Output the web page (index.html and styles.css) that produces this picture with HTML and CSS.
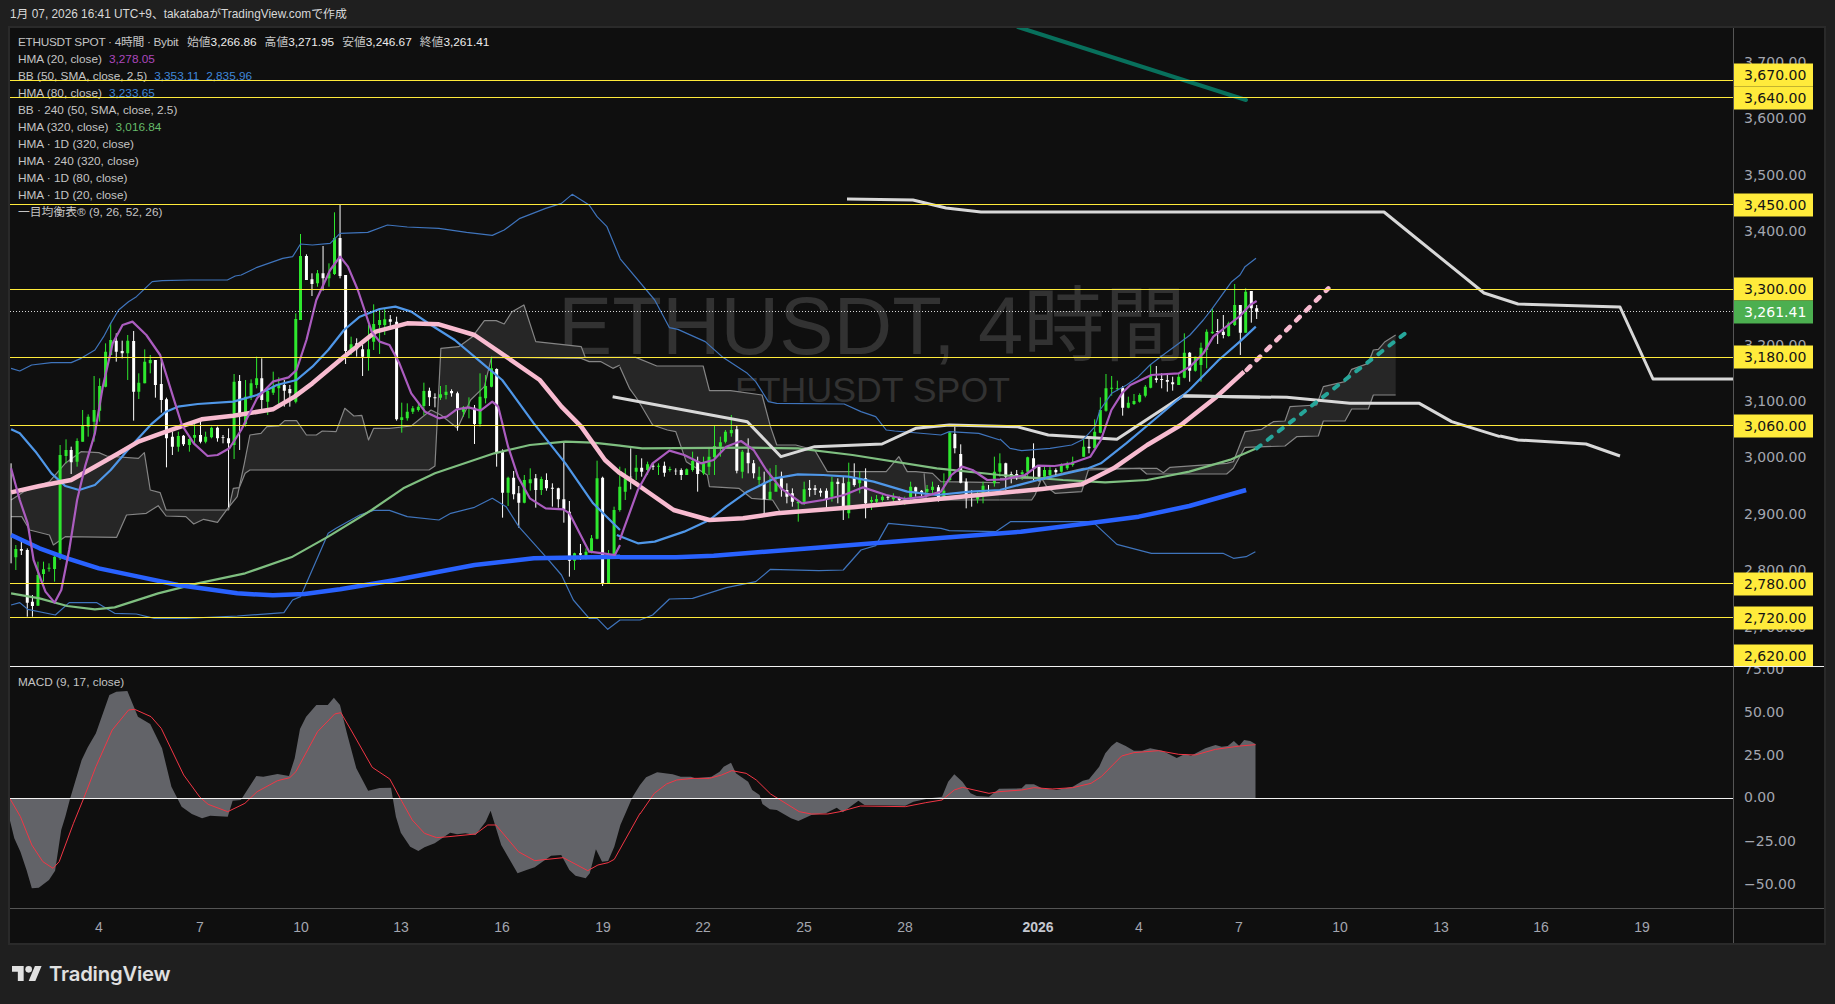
FILE: index.html
```html
<!DOCTYPE html>
<html lang="ja">
<head>
<meta charset="utf-8">
<title>ETHUSDT SPOT 4時間</title>
<link rel="stylesheet" href="styles.css">
</head>
<body>
<header class="title">1月 07, 2026 16:41 UTC+9、takatabaがTradingView.comで作成</header>
<main class="frame">
  <section class="pane pane-main">
    <div class="wm wm-big">ETHUSDT, 4時間</div>
    <div class="wm wm-small">ETHUSDT SPOT</div>
    <div class="legend">
      <div class="row"><span class="sym">ETHUSDT SPOT · 4時間 · Bybit</span><span class="ohlc">始値<b>3,266.86</b></span><span class="ohlc">高値<b>3,271.95</b></span><span class="ohlc">安値<b>3,246.67</b></span><span class="ohlc">終値<b>3,261.41</b></span></div>
      <div class="row">HMA (20, close)<span class="val purple">3,278.05</span></div>
      <div class="row">BB (50, SMA, close, 2.5)<span class="val blue">3,353.11</span><span class="val blue">2,835.96</span></div>
      <div class="row">HMA (80, close)<span class="val blue">3,233.65</span></div>
      <div class="row">BB · 240 (50, SMA, close, 2.5)</div>
      <div class="row">HMA (320, close)<span class="val green">3,016.84</span></div>
      <div class="row">HMA · 1D (320, close)</div>
      <div class="row">HMA · 240 (320, close)</div>
      <div class="row">HMA · 1D (80, close)</div>
      <div class="row">HMA · 1D (20, close)</div>
      <div class="row">一目均衡表® (9, 26, 52, 26)</div>
    </div>
    <svg class="plot" viewBox="10 28 1723 638" aria-hidden="true">
      <!-- clouds -->
      <g transform="translate(0 300) scale(.39541 .33333)">
        <polygon class="cloud" points="28,600 60,575 125,545 165,490 205,455 250,458 270,468 350,475 365,458 380,570 405,578 420,630 578,630 590,565 605,563 620,520 632,510 1085,510 1100,498 1115,145 1160,140 1195,110 1225,62 1255,62 1275,72 1295,35 1325,15 1355,125 1470,140 1480,172 1568,172 1568,195 1550,205 1520,185 1490,185 1470,175 1243,172 1225,260 1190,300 1157,385 1115,345 1090,330 1040,378 985,385 945,385 932,420 915,346 895,348 872,325 850,395 815,393 800,405 775,405 750,362 720,362 705,378 675,380 660,400 632,405 618,490 600,590 578,622 550,667 515,658 490,672 470,650 420,648 400,617 370,640 320,645 295,712 165,710 135,735 125,705 75,690 55,650 28,650"/>
        <polyline class="cloud-edge" points="28,600 60,575 125,545 165,490 205,455 250,458 270,468 350,475 365,458 380,570 405,578 420,630 578,630 590,565 605,563 620,520 632,510 1085,510 1100,498 1115,145 1160,140 1195,110 1225,62 1255,62 1275,72 1295,35 1325,15 1355,125 1470,140 1480,172 1568,172"/>
        <polyline class="cloud-edge" points="28,650 55,650 75,690 125,705 135,735 165,710 295,712 320,645 370,640 400,617 420,648 470,650 490,672 515,658 550,667 578,622 600,590 618,490 632,405 660,400 675,380 705,378 720,362 750,362 775,405 800,405 815,393 850,395 872,325 895,348 915,346 932,420 945,385 985,385 1040,378 1090,330 1115,345 1157,385 1190,300 1225,260 1243,172 1470,175 1490,185 1520,185 1550,205 1568,195"/>
      </g>
      <g transform="translate(600 300) scale(.42092 .33333)">
        <polygon class="cloud" points="47,172 85,172 135,198 245,198 260,272 310,272 385,285 405,380 420,435 465,435 510,450 540,515 680,515 710,470 730,515 750,515 790,520 810,545 950,548 950,600 770,600 600,630 430,640 410,600 360,595 330,565 260,560 255,525 205,485 180,395 160,390 125,375 90,300 70,265 47,200"/>
        <polyline class="cloud-edge" points="47,172 85,172 135,198 245,198 260,272 310,272 385,285 405,380 420,435 465,435 510,450 540,515 680,515 710,470 730,515 750,515 790,520 810,545 950,548"/>
        <polyline class="cloud-edge" points="47,200 70,265 90,300 125,375 160,390 180,395 205,485 255,525 260,560 330,565 360,595 410,600 430,640"/>
        <polyline class="cloud-edge" points="770,520 775,600 950,600"/>
      </g>
      <g transform="translate(1000 230) scale(.33333)">
        <polygon class="cloud" points="0,745 120,745 250,715 470,715 490,728 510,712 680,700 700,695 735,605 785,598 820,575 855,573 870,530 950,525 970,470 1035,455 1055,418 1105,400 1120,360 1135,358 1155,335 1187,315 1187,495 1120,495 1105,537 1055,537 1035,573 970,573 955,618 890,620 855,648 735,652 700,715 680,732 440,732 420,715 265,720 245,785 165,790 140,770 125,745 105,795 95,810 0,810"/>
        <polyline class="cloud-edge" points="0,745 120,745 250,715 470,715 490,728 510,712 680,700 700,695 735,605 785,598 820,575 855,573 870,530 950,525 970,470 1035,455 1055,418 1105,400 1120,360 1135,358 1155,335 1187,315"/>
        <polyline class="cloud-edge" points="0,810 95,810 105,795 125,745 140,770 165,790 245,785 265,720 420,715 440,732 680,732 700,715 735,652 855,648 890,620 955,618 970,573 1035,573 1055,537 1105,537 1120,495 1187,495"/>
      </g>
      <!-- candles -->
      <g transform="translate(0 300) scale(.39541 .33333)">
        <path class="wick up" d="M40 735V810M96 785V917M110 785V845M124 790V815M138 760V845M152 435V780M167 418V490M195 415V500M209 330V425M223 343V410M238 228V425M252 235V365M267 130V262M280 70V165M323 105V240M351 220V297M366 148V250M380 165V220M451 395V455M479 415V455M492 360V430M520 395V430M535 380V415M592 222V477M621 240V380M635 238V300M649 170V265M677 265V345M691 215V285M705 232V315M748 40V310M760 -198V60M803 -90V-40M832 -110V-40M846 -263V-75M888 110V165M932 75V212M945 13V150M960 25V162M973 25V105M1016 308V398M1030 310V362M1044 318V342M1058 310V335M1072 248V345M1114 258V300M1128 255V298M1172 318V350M1186 292V355M1214 220V380M1228 225V310M1243 170V262M1285 530V618M1326 525V610M1341 505V572M1369 530V585M1453 758V810M1482 745V778M1496 705V760M1510 482V718M1539 750V850M1553 620V765"/>
        <path class="body up" d="M40 747V772M96 825V917M110 808V822M124 803V806M138 770V807M152 465V775M167 450V468M195 423V485M209 378V425M223 350V380M238 330V365M252 258V332M267 155V260M280 120V165M323 122V160M351 248V275M366 185V250M380 180V190M451 408V440M479 417V435M492 405V413M520 410V425M535 383V412M592 245V435M621 290V372M635 250V290M649 235V255M677 273V305M691 260V278M705 255V265M748 57V305M760 -132V60M803 -80V-50M832 -80V-65M846 -186V-78M888 133V155M932 148V172M945 72V125M960 60V75M973 58V75M1016 352V360M1030 335V355M1044 325V335M1058 320V330M1072 273V318M1114 283V293M1128 275V285M1172 322V335M1186 322V325M1214 290V372M1228 258V295M1243 205V260M1285 533V578M1326 540V608M1341 538V550M1369 537V570M1453 760V782M1482 755V768M1496 715V755M1510 535V716M1539 768V850M1553 630V765"/>
        <path class="wick down" d="M28 490V790M54 722V765M69 745V950M82 885V950M180 440V522M294 100V185M309 122V175M338 93V362M393 180V293M408 178V338M421 293V502M436 395V465M464 405V438M507 365V430M550 380V425M564 405V430M578 385V622M606 225V450M662 175V330M719 240V320M733 255V320M775 -137V-60M789 -80V-12M817 -162V-28M860 -285V-65M874 -75V192M902 115V170M917 135V228M987 45V90M1003 50V362M1086 263V318M1100 280V322M1142 268V290M1157 275V392M1200 315V432M1256 205V500M1271 448V653M1299 513V598M1312 558V683M1355 522V623M1382 520V572M1397 550V620M1412 563V623M1426 428V668M1440 603V830M1468 732V780M1524 530V858"/>
        <path class="body down" d="M54 747V752M69 750V908M82 905V918M180 450V487M294 122V155M309 153V160M338 123V275M393 180V255M408 252V300M421 298V415M436 410V440M464 407V433M507 405V425M550 383V415M564 412V414M578 415V430M606 243V350M662 235V300M719 255V272M733 267V280M775 -132V-60M789 -62V-48M817 -80V-65M860 -186V-72M874 -75V153M902 130V148M917 148V170M987 58V65M1003 65V358M1086 272V292M1100 292V295M1142 273V280M1157 280V325M1200 323V372M1256 207V458M1271 455V578M1299 533V583M1312 580V608M1355 535V570M1382 540V565M1397 563V566M1412 565V598M1426 598V628M1440 635V782M1468 760V764M1524 533V850"/>
      </g>
      <g transform="translate(600 300) scale(.42092 .33333)">
        <path class="wick up" d="M47 500V635M60 505V600M86 465V540M113 485V525M139 490V525M166 500V515M206 505V525M220 455V515M246 470V525M259 445V525M272 375V525M286 410V470M298 390V430M312 345V410M338 450V535M378 500V560M404 505V600M418 495V570M471 600V665M485 545V615M551 530V605M591 488V655M617 515V580M645 590V630M657 585V615M671 585V605M697 580V610M724 590V615M738 545V600M777 555V585M790 545V580M817 520V600M831 395V545M897 575V610M910 545V610M937 470V560M950 460V530M1003 510V540M1016 470V530M1056 500V540M1069 495V530M1096 490V518M1110 485V510M1123 470V500"/>
        <path class="body up" d="M47 560V630M60 535V575M86 503V515M113 493V510M139 497V500M166 507V510M206 508V525M220 483V510M246 490V520M259 470V500M272 438V472M286 427V440M298 395V425M312 390V400M338 455V515M378 530V540M404 575V598M418 548V575M471 605V610M485 568V605M551 545V590M591 545V640M617 535V550M645 600V605M657 597V605M671 590V600M697 590V598M724 597V605M738 560V592M777 567V575M790 560V570M817 572V592M831 397V540M897 582V598M910 557V580M937 515V550M950 490V515M1003 517V522M1016 472V515M1056 510V530M1069 510V525M1096 493V515M1110 490V505M1123 485V495"/>
        <path class="wick down" d="M73 445V568M99 475V530M126 490V510M153 485V530M180 505V525M193 505V540M232 470V575M325 375V520M352 415V520M365 480V535M390 515V645M431 515V590M444 550V610M457 565V620M498 540V590M511 555V585M524 565V590M538 565V625M565 535V610M578 530V660M604 490V560M631 505V655M684 585V600M711 590V605M750 560V590M764 570V590M804 555V605M843 380V460M857 433V550M870 535V625M883 570V620M923 555V580M964 488V570M977 515V550M990 510V540M1030 430V545M1043 495V545M1083 505V525"/>
        <path class="body down" d="M73 530V532M99 503V515M126 497V500M153 497V518M180 512V514M193 510V525M232 485V522M325 388V512M352 458V490M365 490V520M390 548V598M431 535V568M444 570V590M457 580V605M498 565V570M511 565V570M524 572V578M538 572V600M565 545V552M578 550V630M604 535V555M631 535V610M684 590V593M711 593V600M750 562V575M764 572V582M804 562V593M843 402V445M857 462V548M870 545V595M883 585V590M923 570V574M964 490V530M977 522V525M990 522V530M1030 475V505M1043 500V530M1083 510V517"/>
      </g>
      <g transform="translate(1000 230) scale(.33333)">
        <path class="wick up" d="M251 625V680M284 568V650M301 502V610M318 432V545M335 438V497M352 452V482M385 500V535M402 492V525M419 490V518M436 465V502M452 403V475M536 430V465M553 310V445M586 380V425M603 338V455M620 298V415M637 235V312M686 275V320M704 162V288M737 175V308"/>
        <path class="body up" d="M251 650V680M284 605V655M301 540V608M318 475V542M335 473V476M352 475V478M385 518V533M402 513V522M419 495V515M436 470V497M452 437V473M536 440V465M553 368V443M586 380V422M603 353V405M620 305V360M637 305V310M686 280V318M704 225V285M737 185V308"/>
        <path class="wick down" d="M267 625V670M368 468V557M469 408V458M485 430V475M502 435V485M518 440V482M569 366V455M653 267V342M670 255V325M721 225V375M754 183V278M770 225V267"/>
        <path class="body down" d="M267 650V655M368 473V533M469 445V450M485 447V450M502 450V455M518 457V463M569 368V422M653 303V306M670 305V315M721 225V308M754 183V235M770 235V245"/>
      </g>
      <!-- indicators -->
      <g transform="translate(0 300) scale(.39541 .33333)">
        <polyline class="bb" points="28,205 50,213 80,195 130,188 180,188 205,175 240,150 262,110 280,70 300,30 325,5 345,-10 385,-55 410,-58 480,-60 520,-60 575,-60 595,-72 610,-75 650,-98 715,-125 740,-130 760,-168 790,-165 835,-170 860,-200 930,-203 980,-225 1030,-219 1110,-215 1180,-203 1245,-194 1275,-210 1315,-245 1380,-275 1420,-290 1447,-317 1490,-285 1510,-250 1535,-220 1568,-125"/>
        <polyline class="bb" points="28,915 50,908 70,928 140,945 175,908 245,908 290,940 345,942 390,955 470,955 600,948 718,938 740,900 760,890 830,700 850,685 910,645 945,631 985,631 1030,650 1110,660 1140,640 1200,622 1245,595 1280,620 1312,680 1380,770 1420,825 1450,900 1490,955 1510,955 1537,988 1568,960"/>
        <polyline class="hgreen" points="28,880 100,895 170,918 240,928 290,922 400,880 500,850 620,820 740,770 830,710 940,630 1020,565 1100,520 1250,460 1340,435 1430,425 1500,428 1568,437"/>
        <polyline class="hblue" points="28,705 100,745 170,775 250,805 350,830 450,855 600,880 690,886 770,882 860,868 1000,840 1200,795 1350,775 1568,770"/>
        <polyline class="h80" points="28,388 50,400 90,455 130,520 165,558 200,570 240,555 280,510 330,440 385,370 420,335 450,320 500,312 590,305 650,285 700,255 750,240 790,200 830,150 870,90 910,50 960,27 1000,20 1040,35 1090,75 1150,120 1220,190 1270,240 1350,370 1430,490 1500,610 1568,690"/>
        <polyline class="hpink" points="28,577 100,558 180,540 240,500 300,460 350,425 420,395 510,358 590,347 690,328 745,290 790,250 870,170 950,95 1030,70 1110,73 1200,105 1280,170 1365,240 1420,320 1470,380 1530,480 1568,520"/>
        <polyline class="h20" points="28,505 50,600 70,670 85,780 115,875 138,908 155,870 175,750 195,600 215,500 240,400 260,260 285,130 310,75 335,65 370,105 405,165 435,280 460,375 490,430 525,468 550,465 580,445 610,390 650,295 690,245 730,232 750,210 775,120 800,0 835,-90 860,-130 880,-100 905,-30 940,95 960,125 985,135 1010,190 1040,280 1075,335 1110,355 1130,350 1155,328 1185,322 1215,332 1245,305 1260,320 1285,440 1310,530 1340,595 1380,625 1425,628 1440,640 1490,755 1525,760 1555,765 1568,735"/>
      </g>
      <g transform="translate(600 300) scale(.42092 .33333)">
        <polyline class="bb" points="47,-125 130,0 165,83 185,88 250,125 290,170 350,220 370,245 400,305 420,310 580,312 620,335 655,350 680,390 700,393 810,405 830,395 900,400 950,420"/>
        <polyline class="bb" points="47,960 95,960 125,945 165,897 220,895 300,863 370,845 405,808 520,812 578,810 620,750 655,737 685,670 810,685 830,692 940,695 975,665 1050,665 1170,665 1228,733 1310,760 1480,760 1505,775 1535,770 1557,755"/>
        <polyline class="hgreen" points="47,437 100,445 350,443 470,445 600,465 800,505 950,525 1100,540 1200,547 1300,540 1400,515 1500,478 1560,445"/>
        <polyline class="hblue" points="47,772 180,772 270,767 500,745 800,715 1000,695 1170,668 1280,650 1400,618 1535,570"/>
        <polyline class="kijun" points="30,290 350,365 430,470 510,440 670,432 750,385 830,375 990,380 1065,405 1228,418 1385,287 1568,292"/>
        <polyline class="h80" points="40,705 90,730 130,725 200,695 260,660 300,620 350,575 415,535 470,523 530,525 590,530 650,545 730,575 800,585 880,575 950,570 1040,540 1160,505 1190,490 1250,430 1330,345 1400,270 1470,180 1520,125 1558,80"/>
        <polyline class="hpink" points="47,519 90,555 175,630 260,660 340,655 420,640 600,622 700,610 900,585 1050,567 1145,553 1220,505 1300,435 1380,375 1465,290 1530,215"/>
        <polyline class="h20" points="47,720 90,570 125,490 165,452 200,465 240,490 270,480 300,440 335,423 365,450 395,510 430,565 480,610 530,600 580,585 625,562 680,585 725,597 770,590 810,575 835,525 860,500 885,510 920,540 960,538 1010,525 1040,497 1080,498 1120,490 1165,470 1190,420 1215,330 1240,280 1260,255 1310,225"/>
      </g>
      <g transform="translate(1000 230) scale(.33333)">
        <polyline class="bb" points="0,627 30,655 65,662 150,655 215,645 250,628 285,590 300,540 335,490 380,465 415,440 450,405 485,378 530,345 570,315 610,270 637,235 695,155 720,135 735,110 768,85"/>
        <polyline class="kijun" points="550,498 860,502 1050,520 1258,520 1355,575 1500,620"/>
        <polyline class="hpink dash" points="740,420 985,175"/>
        <polyline class="hteal dash" points="770,655 1222,305"/>
        <polyline class="h20" points="453,435 536,430 570,410 610,370 640,320 685,285 720,258 750,225 770,213"/>
      </g>
      <polyline class="kijun" points="1500,436 1518,440 1586,444 1620,456"/>
      <polyline class="kijun" points="847,199 913,200 946,208 981,212 1384,212 1416,238 1484,293 1518,304 1620,307 1653,379 1733,379"/>
      <line class="tenkan" x1="1018" y1="27" x2="1246" y2="100"/>
      <path class="last" d="M10 311.5H1733"/>
      <path class="level" d="M10 80.5H1733M10 97.5H1733M10 204.5H1733M10 289.5H1733M10 357.5H1733M10 425.5H1733M10 583.5H1733M10 617.5H1733"/>
    </svg>
  </section>
  <section class="axis axis-main">
    <span class="tick" style="top:34px">3,700.00</span>
    <span class="tick" style="top:90px">3,600.00</span>
    <span class="tick" style="top:147px">3,500.00</span>
    <span class="tick" style="top:203px">3,400.00</span>
    <span class="tick" style="top:317px">3,200.00</span>
    <span class="tick" style="top:373px">3,100.00</span>
    <span class="tick" style="top:429px">3,000.00</span>
    <span class="tick" style="top:486px">2,900.00</span>
    <span class="tick" style="top:542px">2,800.00</span>
    <span class="tick" style="top:599px">2,700.00</span>
    <span class="tag" style="top:46.5px">3,670.00</span>
    <span class="tag" style="top:69.5px">3,640.00</span>
    <span class="tag" style="top:176.5px">3,450.00</span>
    <span class="tag" style="top:260.5px">3,300.00</span>
    <span class="tag now" style="top:283.5px">3,261.41</span>
    <span class="tag" style="top:329px">3,180.00</span>
    <span class="tag" style="top:397.5px">3,060.00</span>
    <span class="tag" style="top:555.5px">2,780.00</span>
    <span class="tag" style="top:589.5px">2,720.00</span>
    <span class="tag" style="top:627.5px">2,620.00</span>
  </section>
  <section class="pane pane-macd">
    <div class="legend"><div class="row">MACD (9, 17, close)</div></div>
    <svg class="plot" viewBox="10 667 1723 241" aria-hidden="true">
      <g transform="translate(0 660) scale(.40816 .33333)">
        <polygon class="macd-area" points="24,415 24,480 35,535 50,575 65,630 78,685 95,683 120,660 135,632 150,510 160,470 172,415 200,300 215,262 235,220 268,105 285,95 312,93 338,170 368,192 397,265 420,380 445,440 470,462 495,475 515,467 558,470 570,422 590,420 628,348 645,350 680,342 708,348 722,295 735,207 750,170 775,135 803,135 818,113 833,135 850,220 873,325 902,392 930,384 958,383 970,470 982,518 1005,560 1025,573 1040,562 1065,550 1103,518 1120,523 1140,520 1165,525 1190,485 1202,452 1228,555 1268,640 1290,630 1310,622 1350,587 1375,585 1395,630 1410,647 1435,655 1445,640 1460,568 1475,605 1490,603 1505,560 1520,495 1550,410 1568,375 1568,415"/>
        <polyline class="signal" points="24,415 50,470 78,555 105,605 130,625 145,605 180,490 205,415 235,320 275,210 315,150 330,148 370,170 395,205 450,345 490,412 510,433 558,455 600,430 630,395 680,362 710,353 725,335 778,215 820,162 835,158 860,210 912,322 955,357 985,425 1010,480 1040,520 1070,533 1100,530 1165,522 1195,495 1215,495 1270,575 1310,602 1380,593 1440,632 1465,615 1490,608 1505,598 1568,460"/>
      </g>
      <g transform="translate(640 660) scale(.40816 .33333)">
        <polygon class="macd-area" points="0,375 15,352 42,337 80,343 100,350 125,350 135,355 175,350 195,335 205,320 223,308 235,340 265,365 275,390 293,405 300,432 318,448 335,450 370,475 388,483 420,465 455,460 482,443 497,457 535,422 550,435 650,437 670,425 710,415 740,410 755,365 770,343 790,365 810,400 825,408 855,410 880,386 935,385 945,373 965,373 985,385 1020,390 1060,380 1085,362 1100,358 1125,320 1140,280 1155,258 1168,245 1190,258 1210,272 1230,272 1250,265 1280,272 1315,294 1335,282 1350,287 1385,265 1410,255 1425,260 1440,258 1455,243 1468,258 1480,240 1495,243 1508,252 1508,415 0,415"/>
        <polyline class="signal" points="0,462 35,400 65,372 90,360 130,355 170,355 200,345 225,332 260,340 285,360 320,402 390,455 420,462 460,462 490,455 540,438 650,440 700,428 740,420 770,390 790,382 855,400 880,395 935,390 965,383 1010,387 1060,383 1105,370 1130,350 1180,288 1210,278 1270,272 1320,283 1360,285 1410,268 1470,258 1508,254"/>
      </g>
      <path class="zero" d="M10 798.5H1733"/>
    </svg>
  </section>
  <section class="axis axis-macd">
    <span class="tick" style="top:2px">75.00</span>
    <span class="tick" style="top:45px">50.00</span>
    <span class="tick" style="top:87.5px">25.00</span>
    <span class="tick" style="top:130px">0.00</span>
    <span class="tick" style="top:174px">−25.00</span>
    <span class="tick" style="top:217px">−50.00</span>
  </section>
  <section class="times">
    <span class="time" style="left:89px">4</span>
    <span class="time" style="left:190px">7</span>
    <span class="time" style="left:291px">10</span>
    <span class="time" style="left:391px">13</span>
    <span class="time" style="left:492px">16</span>
    <span class="time" style="left:593px">19</span>
    <span class="time" style="left:693px">22</span>
    <span class="time" style="left:794px">25</span>
    <span class="time" style="left:895px">28</span>
    <span class="time year" style="left:1028px">2026</span>
    <span class="time" style="left:1129px">4</span>
    <span class="time" style="left:1229px">7</span>
    <span class="time" style="left:1330px">10</span>
    <span class="time" style="left:1431px">13</span>
    <span class="time" style="left:1531px">16</span>
    <span class="time" style="left:1632px">19</span>
  </section>
  <section class="corner"></section>
</main>
<footer class="brand">
  <svg class="brand-mark" viewBox="0 4 36 18" aria-hidden="true"><path d="M14 22H7V11H0V4h14v18zM28 22h-8l7.500-18h8L28 22z"/><circle cx="20" cy="8" r="4"/></svg>
  <span class="brand-name">TradingView</span>
</footer>
</body>
</html>
```
FILE: styles.css
```css
* { box-sizing: border-box; }
html, body { margin: 0; height: 100%; }
body {
  background: #1f1f1f;
  color: #d1d4dc;
  font-family: "Liberation Sans", "Noto Sans CJK JP", sans-serif;
  display: flex;
  flex-direction: column;
  overflow: hidden;
}
.title {
  height: 26px;
  padding: 7px 0 0 10px;
  font-size: 11.850px;
  line-height: 15px;
  color: #d8d8d8;
}
.frame {
  width: 1818px;
  margin-left: 8px;
  border: 2px solid #2a2a2a;
  display: grid;
  grid-template-columns: 1723px 91px;
  grid-template-rows: 639px 242px 34px;
  background: #0f0f0f;
}
.pane { position: relative; overflow: hidden; }
.pane-main, .axis-main { border-bottom: 1px solid #f2f2f2; }
.pane-macd, .axis-macd { border-bottom: 1px solid #555; }
.plot { position: absolute; inset: 0; width: 1723px; display: block; }
.pane-main .plot { height: 638px; }
.pane-macd .plot { height: 241px; }

.wm {
  position: absolute;
  white-space: nowrap;
  color: #323232;
}
.wm-big { left: 548px; top: 252px; font-size: 81.300px; line-height: 92px; }
.wm-small { left: 725px; top: 340px; font-size: 35.700px; line-height: 44px; }

.legend {
  position: absolute;
  left: 8px;
  top: 6px;
  font-size: 11.800px;
  line-height: 17px;
  color: #c4c4c4;
  white-space: nowrap;
}
.pane-macd .legend { top: 7px; }
.row { height: 17px; }
.sym { display: inline-block; width: 169px; letter-spacing: -.3px; }
.ohlc { display: inline-block; width: 77.600px; }
.ohlc b { font-weight: 400; color: #ececec; }
.val { margin-left: 7px; }
.purple { color: #ab47bc; }
.blue { color: #3f86d8; }
.green { color: #66bb6a; }

.axis { position: relative; overflow: hidden; border-left: 1px solid #555; }
.tick, .tag {
  position: absolute;
  left: 0;
  transform: translateY(-50%);
  font-family: "DejaVu Sans", sans-serif;
  font-size: 14px;
  line-height: 23px;
  padding-left: 10px;
  white-space: nowrap;
}
.tick { color: #a3a6af; }
.tag { width: 79px; height: 23px; background: #ffeb3b; color: #131313; }
.now { background: #4caf50; color: #fff; }

.times { position: relative; }
.time {
  position: absolute;
  top: 9px;
  transform: translateX(-50%);
  font-size: 14px;
  line-height: 18px;
  color: #a3a6af;
}
.year { font-weight: 700; color: #c4c7cf; }
.corner { border-left: 1px solid #555; }

.brand {
  flex: 1;
  display: flex;
  align-items: center;
  gap: 7px;
  padding: 0 0 0 12px;
  margin-top: -3px;
}
.brand-mark { width: 30px; height: 15px; fill: #e0e0e0; }
.brand-name {
  font-family: Inter, "Liberation Sans", sans-serif;
  font-size: 20.300px;
  font-weight: 600;
  letter-spacing: -.2px;
  color: #e0e0e0;
}

/* chart marks */
.plot polyline, .plot line, .plot path { fill: none; vector-effect: non-scaling-stroke; stroke-linejoin: round; }
.cloud { fill: #262626; stroke: none; }
.cloud-edge { stroke: #858585; stroke-width: 1.200; }
.wick { stroke-width: 1; }
.body { stroke-width: 3; }
.up { stroke: #2ee82e; }
.down { stroke: #ffffff; }
.bb { stroke: #3f74bc; stroke-width: 1.200; }
.h20 { stroke: #ab5cbf; stroke-width: 2.200; }
.h80 { stroke: #4f97e8; stroke-width: 2.200; }
.hgreen { stroke: #7fbf80; stroke-width: 2.200; }
.hblue { stroke: #2962ff; stroke-width: 4.500; }
.hpink { stroke: #f8bbd0; stroke-width: 4.500; }
.hteal { stroke: #26a69a; stroke-width: 4; }
.dash { stroke-dasharray: 5 9; stroke-linecap: round; }
.kijun { stroke: #d8d8d8; stroke-width: 3; }
.tenkan { stroke: #08705c; stroke-width: 4; stroke-linecap: round; }
.level { stroke: #ffeb3b; stroke-width: 1; }
.last { stroke: #d8d8d8; stroke-width: 1; stroke-dasharray: 1 2; }
.zero { stroke: #f2f2f2; stroke-width: 1; }
.macd-area { fill: #626368; stroke: none; }
.signal { stroke: #f23645; stroke-width: 1; }
```
